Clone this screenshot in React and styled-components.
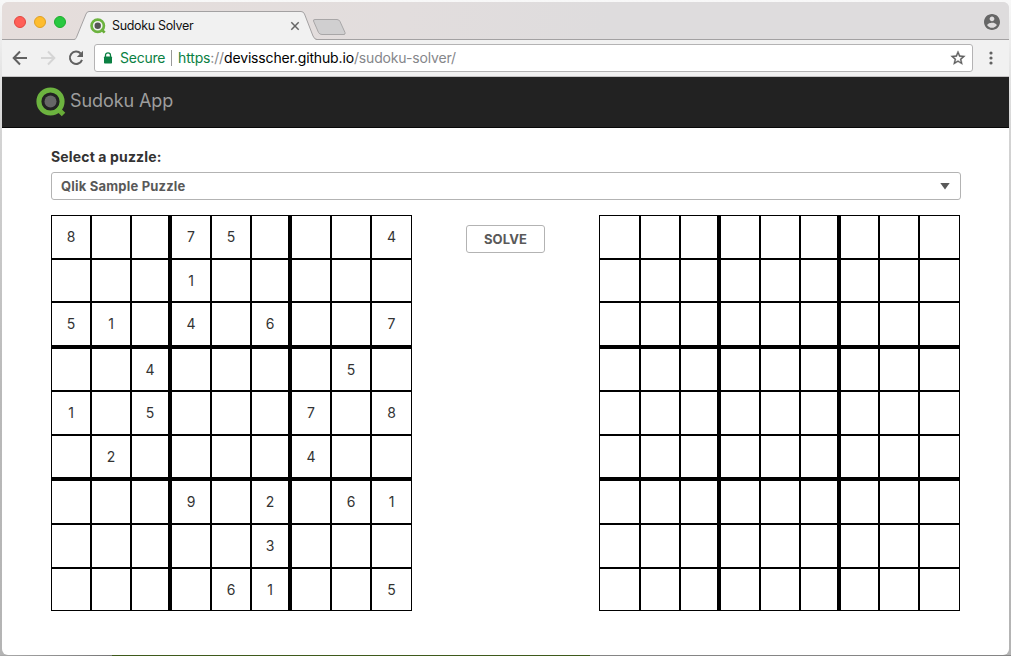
import React from 'react';
import styled, { createGlobalStyle } from 'styled-components';

const GlobalStyle = createGlobalStyle`
  * { box-sizing: border-box; }
  html, body { margin: 0; height: 100%; }
  body { background: #f8f8f8; overflow: hidden; font-family: Inter, Roboto, sans-serif; }
`;

const Desktop = styled.div`
  width: 1011px;
  height: 656px;
  padding: 2px 2px 0;
  overflow: hidden;
  background: linear-gradient(#f8f8f8, #d4d4d4 20%, #b9b9b9 60%, #b4b4b4);
`;
const Window = styled.div`
  display: flex;
  flex-direction: column;
  height: 653px;
  border-radius: 6px;
  overflow: hidden;
  background: #fff;
`;
const Backdrop = styled.div`
  height: 1px;
  margin: 0 -2px;
  background: linear-gradient(90deg, #aaa, #777 112px, #3f5a1c 112px, #3f5a1c 590px, #858585 590px);
`;
const TabBar = styled.div`
  display: flex;
  flex: none;
  height: 38px;
  padding-right: 9px;
  background: #dfdcdd;
  background-image: linear-gradient(100deg, #e5dddb, #e2dddd 40%, #dedcdd 60%);
  box-shadow: inset 0 -1px #a3a1a2;
`;
const Lights = styled.div`
  display: flex;
  gap: 8px;
  padding: 14px 0 0 12px;
  width: 72px;
`;
const Light = styled.span`
  width: 12px;
  height: 12px;
  border-radius: 50%;
  background: ${p => p.$fill};
  border: 1px solid ${p => p.$edge};
`;
const Tab = styled.div`
  position: relative;
  width: 243px;
  height: 38px;
  display: flex;
  align-items: center;
  padding: 10px 0 0 16px;
`;
const TabShape = styled.svg`
  position: absolute;
  left: 0;
  top: 0;
`;
const TabTitle = styled.span`
  position: relative;
  margin-left: 6px;
  width: 178px;
  font-size: 12.5px;
  line-height: 16px;
  letter-spacing: -0.34px;
  color: #111;
`;
const Glyph = styled.svg`
  position: relative;
  display: block;
  flex: none;
`;
const NewTab = styled.svg`
  display: block;
  margin: 16px auto 0 -5px;
`;
const Account = styled.svg`
  display: block;
  margin-top: 12px;
`;
const Toolbar = styled.div`
  display: flex;
  flex: none;
  align-items: center;
  height: 37px;
  padding: 0 16px 0 10px;
  background: #f1f1f1;
  border-bottom: 1px solid #c6c4c5;
`;
const NavButtons = styled.div`
  display: flex;
  gap: 12px;
  width: 82px;
`;
const AddressBar = styled.div`
  display: flex;
  align-items: center;
  flex: 1;
  height: 28px;
  padding: 0 6px 0 8px;
  border: 1px solid #b4b3b4;
  border-radius: 3px;
  background: #fff;
  font-size: 14px;
  line-height: 18px;
  white-space: nowrap;
`;
const Secure = styled.span`
  margin-left: 7px;
  width: 51px;
  letter-spacing: -0.25px;
  color: #0b8043;
`;
const Divider = styled.i`
  width: 1px;
  height: 16px;
  margin-right: 6px;
  background: #999;
`;
const Url = styled.span`
  flex: 1;
  letter-spacing: -0.15px;
  color: #85868a;
`;
const Scheme = styled.span`color: #0b8043;`;
const Host = styled.span`color: #000;`;
const MenuDots = styled.svg`
  display: block;
  margin-left: 16px;
`;
const Navbar = styled.header`
  display: flex;
  flex: none;
  align-items: flex-start;
  height: 51px;
  padding: 10px 0 0 34px;
  background: #222;
  border-bottom: 1px solid #080808;
`;
const Brand = styled.span`
  margin: 2px 0 0 4px;
  font-size: 18px;
  line-height: 24px;
  letter-spacing: -0.08px;
  color: #9d9d9d;
`;
const Main = styled.main`
  padding: 19px 48px 0 49px;
`;
const Label = styled.label`
  display: block;
  height: 25px;
  font-size: 14px;
  font-weight: 700;
  line-height: 20px;
  letter-spacing: 0.15px;
  color: #333;
`;
const Select = styled.div`
  display: flex;
  align-items: center;
  justify-content: space-between;
  height: 28px;
  padding: 0 10px 0 9px;
  border: 1px solid #b3b3b3;
  border-radius: 3px;
  font-size: 13px;
  font-weight: 700;
  letter-spacing: 0.2px;
  color: #595959;
`;
const Boards = styled.div`
  display: flex;
  margin-top: 15px;
  align-items: flex-start;
`;
const Center = styled.div`
  display: flex;
  justify-content: center;
  width: 187px;
  padding: 10px 0 0 0;
`;
const Solve = styled.button`
  width: 79px;
  height: 28px;
  padding: 0;
  border: 1px solid #b3b3b3;
  border-radius: 3px;
  background: #fff;
  font: 700 13px Inter, sans-serif;
  letter-spacing: 0.15px;
  color: #595959;
`;
const Board = styled.div`
  display: grid;
  grid-template-columns: ${p => p.$columns};
  grid-template-rows: 44px 43px 46px 43px 44px 45px 44px 44px 43px;
`;
const Cell = styled.div`
  display: flex;
  align-items: center;
  justify-content: center;
  border: 1px solid #000;
  border-right-width: ${p => (p.$boxRight ? 3 : 1)}px;
  border-bottom-width: ${p => (p.$boxBottom ? 3 : 1)}px;
  font-size: 14px;
  line-height: 20px;
  color: #333;
`;

const PUZZLE = [
  '8..75...4',
  '...1.....',
  '51.4.6..7',
  '..4....5.',
  '1.5...7.8',
  '.2....4..',
  '...9.2.61',
  '.....3...',
  '....61..5',
];
const EMPTY = Array(9).fill('.........');

function Logo({ size, center = '#666' }) {
  return (
    <Glyph width={size} height={size} viewBox="0 0 30 30">
      <path d="M21 21L27.500 27.500" stroke="#68ac37" strokeWidth="5" />
      <circle cx="14.500" cy="14.500" r="11.600" fill="none" stroke="#6cb33f" strokeWidth="5" />
      <circle cx="14.500" cy="14.500" r="6" fill={center} />
    </Glyph>
  );
}

function SudokuBoard({ rows, columns }) {
  return (
    <Board $columns={columns}>
      {rows.map((row, y) =>
        [...row].map((value, x) => (
          <Cell key={`${y}-${x}`} $boxRight={x === 2 || x === 5} $boxBottom={y === 2 || y === 5}>
            {value === '.' ? null : value}
          </Cell>
        ))
      )}
    </Board>
  );
}

export default function App() {
  return (
    <Desktop>
      <GlobalStyle />
      <Window>
        <TabBar>
          <Lights>
            <Light $fill="#ff5f57" $edge="#e2463f" />
            <Light $fill="#febc2e" $edge="#dfa023" />
            <Light $fill="#28c840" $edge="#1dad2b" />
          </Lights>
          <Tab>
            <TabShape width="243" height="38">
              <path d="M0 38C2 37 2 36.500 3 34L12 12Q13 9.500 15 9.500H227Q229.500 9.500 230.500 12L239 34Q240.500 37.500 243 38Z" fill="#f1f1f1" />
              <path d="M0 37.500C2 37 2 36.500 3 34L12 12Q13 9.500 15 9.500H227Q229.500 9.500 230.500 12L239 34Q240.500 37.500 243 37.500" fill="none" stroke="#a3a1a2" />
            </TabShape>
            <Logo size={16} center="#555" />
            <TabTitle>Sudoku Solver</TabTitle>
            <Glyph width="10" height="10" viewBox="0 0 10 10">
              <path d="M1.300 1.300L8.700 8.700M8.700 1.300L1.300 8.700" stroke="#666" strokeWidth="1.500" />
            </Glyph>
          </Tab>
          <NewTab width="35" height="18">
            <path d="M3 1.500H25Q27 1.500 28 3.500L33 14.500Q33.500 16.500 32 16.500H10Q7.500 16.500 6.500 14.500L1.500 3Q1 1.500 3 1.500Z" fill="#d0cfd0" stroke="#a8a6a7" />
          </NewTab>
          <Account width="16" height="16" viewBox="2 2 20 20">
            <path fill="#666" d="M12 2C6.480 2 2 6.480 2 12s4.480 10 10 10 10-4.480 10-10S17.520 2 12 2zm0 3c1.660 0 3 1.340 3 3s-1.340 3-3 3-3-1.340-3-3 1.340-3 3-3zm0 14.200c-2.500 0-4.710-1.280-6-3.220.030-1.990 4-3.080 6-3.080 1.990 0 5.970 1.090 6 3.080-1.290 1.940-3.500 3.220-6 3.220z" />
          </Account>
        </TabBar>
        <Toolbar>
          <NavButtons>
            <Glyph width="16" height="16" viewBox="0 0 16 16">
              <path d="M15 8H2M8 1.500L1.700 8L8 14.500" fill="none" stroke="#616161" strokeWidth="2" />
            </Glyph>
            <Glyph width="16" height="16" viewBox="0 0 16 16">
              <path d="M1 8H14M8 1.500L14.300 8L8 14.500" fill="none" stroke="#d5d5d5" strokeWidth="2" />
            </Glyph>
            <Glyph width="16" height="16" viewBox="0 0 16 16">
              <path d="M12.700 3.500A6.200 6.200 0 1 0 14 9.800" fill="none" stroke="#616161" strokeWidth="2" />
              <path d="M15 .8V7H8.800Z" fill="#616161" />
            </Glyph>
          </NavButtons>
          <AddressBar>
            <Glyph width="10" height="12" viewBox="0 0 10 12">
              <path d="M2.500 5V3.300a2.500 2.500 0 0 1 5 0V5" fill="none" stroke="#0b8043" strokeWidth="1.300" />
              <rect x="1" y="4.500" width="8" height="7" rx=".8" fill="#0b8043" />
            </Glyph>
            <Secure>Secure</Secure>
            <Divider />
            <Url><Scheme>https</Scheme>://<Host>devisscher.github.io</Host>/sudoku-solver/</Url>
            <Glyph width="16" height="16" viewBox="1 1 22 22">
              <path fill="#616161" stroke="#616161" strokeWidth=".5" d="M22 9.240l-7.190-.620L12 2 9.190 8.630 2 9.240l5.460 4.730L5.820 21 12 17.270 18.180 21l-1.630-7.030L22 9.240zM12 15.400l-3.760 2.270 1-4.280-3.320-2.880 4.380-.380L12 6.100l1.710 4.040 4.380.380-3.320 2.880 1 4.280L12 15.400z" />
            </Glyph>
          </AddressBar>
          <MenuDots width="4" height="14">
            <circle cx="2" cy="2" r="1.600" fill="#616161" />
            <circle cx="2" cy="7" r="1.600" fill="#616161" />
            <circle cx="2" cy="12" r="1.600" fill="#616161" />
          </MenuDots>
        </Toolbar>
        <Navbar>
          <Logo size={30} />
          <Brand>Sudoku App</Brand>
        </Navbar>
        <Main>
          <Label>Select a puzzle:</Label>
          <Select>
            Qlik Sample Puzzle
            <Glyph width="10" height="8"><path d="M.3 1H9.700L5 7.500Z" fill="#595959" /></Glyph>
          </Select>
          <Boards>
            <SudokuBoard rows={PUZZLE} columns="repeat(8, 40px) 41px" />
            <Center><Solve>SOLVE</Solve></Center>
            <SudokuBoard rows={EMPTY} columns="41px repeat(5, 40px) 39px 40px 41px" />
          </Boards>
        </Main>
      </Window>
      <Backdrop />
    </Desktop>
  );
}
